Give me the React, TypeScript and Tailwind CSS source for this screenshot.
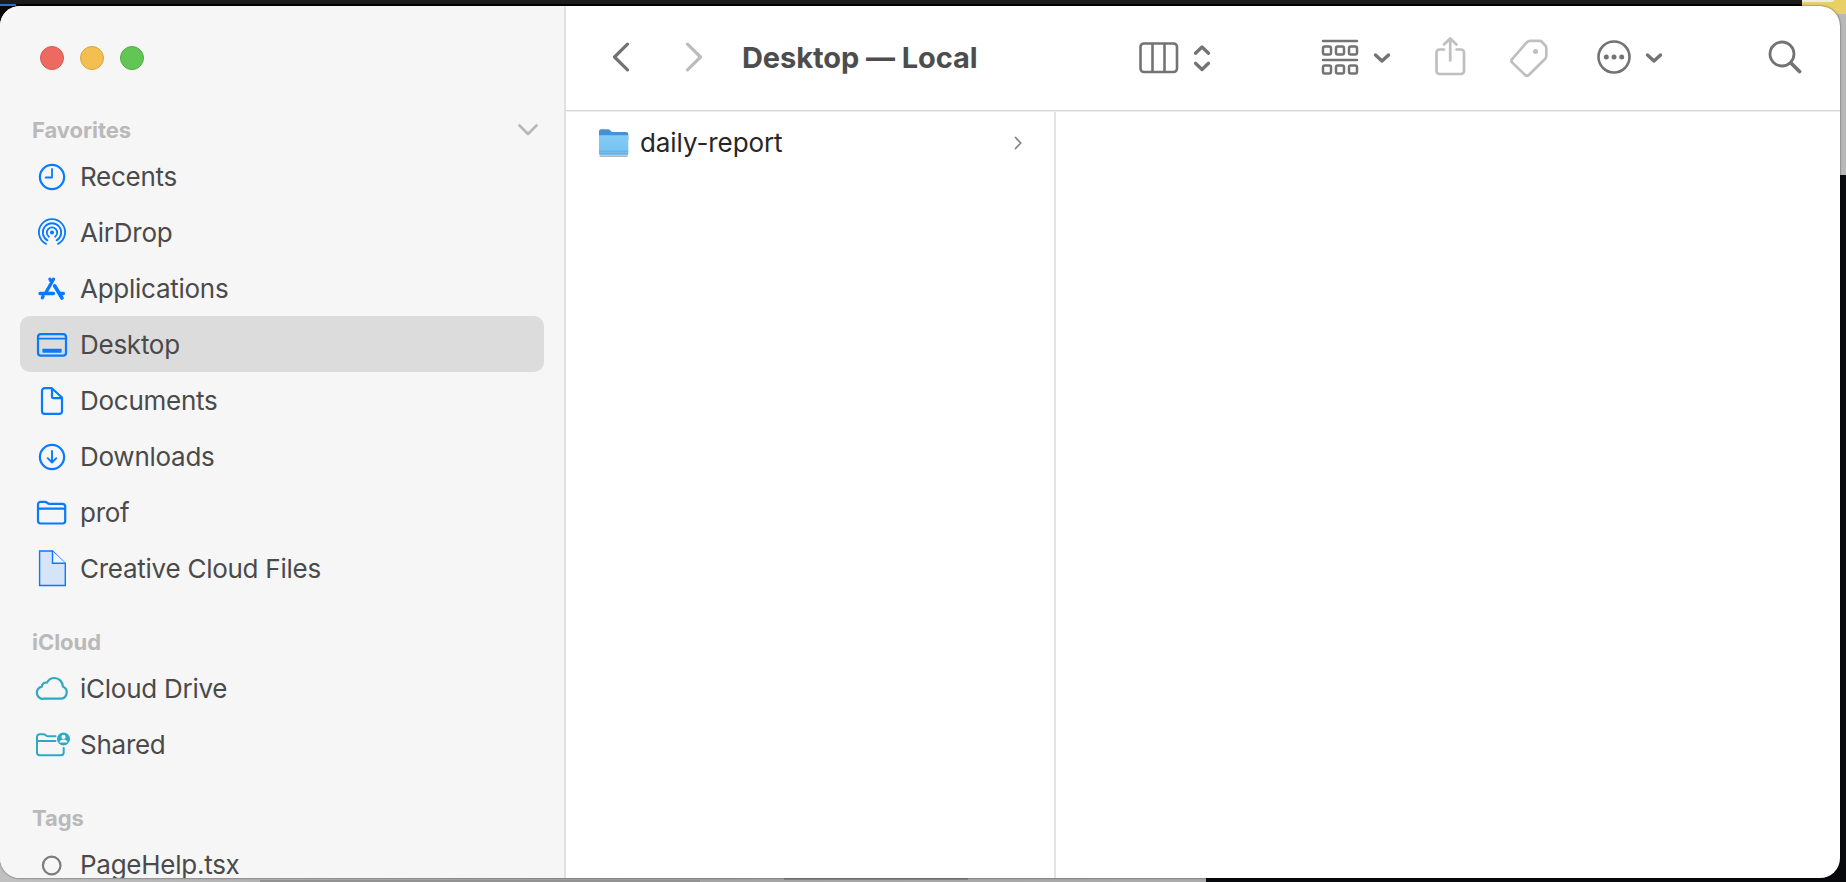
import type { ReactNode } from "react";

type IconProps = { children: ReactNode; color?: string };

function SideIcon({ children, color = "#077aff" }: IconProps) {
  return (
    <svg width="36" height="40" viewBox="0 -1 36 40" fill="none" stroke={color} strokeWidth="2.2" strokeLinecap="round" strokeLinejoin="round" className="shrink-0">
      {children}
    </svg>
  );
}

const TEAL = "#30a8c2";

const icons = {
  recents: (
    <SideIcon>
      <circle cx="18" cy="20" r="12.1" />
      <path d="M18 12v8.5h-6.3" strokeWidth="1.8" />
    </SideIcon>
  ),
  airdrop: (
    <SideIcon>
      <circle cx="18" cy="19.5" r="2" fill="#077aff" stroke="none" />
      <path d="M14.9 23.7a5.2 5.2 0 1 1 6.2 0M13.4 27.4a9.2 9.2 0 1 1 9.2 0M12 30.9a13.1 13.1 0 1 1 12 0" strokeWidth="1.8" />
    </SideIcon>
  ),
  apps: (
    <SideIcon>
      <path d="M19.5 10.2 11.6 24M15.9 10.2 17.6 12.9M6 24.5h13.5M26.2 24.5h3.2M8.3 28.8l.8-1.4" strokeWidth="3.3" />
      <path d="M20.6 16.8 28 29" strokeWidth="3.6" />
    </SideIcon>
  ),
  desktop: (
    <SideIcon>
      <rect x="4" y="9.2" width="28" height="21.4" rx="2.8" />
      <path d="M4 13.7h28" strokeWidth="1.7" />
      <rect x="8.4" y="23.7" width="19.2" height="4" rx="0.6" fill="#077aff" stroke="none" />
    </SideIcon>
  ),
  documents: (
    <SideIcon>
      <path d="M10.6 7.2h7.2L28 16.5v13.7a2.6 2.6 0 0 1-2.6 2.6H10.6A2.6 2.6 0 0 1 8 30.2V9.8a2.6 2.6 0 0 1 2.6-2.6zM18 7.5v8a1.6 1.6 0 0 0 1.6 1.6H27.6" />
    </SideIcon>
  ),
  downloads: (
    <SideIcon>
      <circle cx="18" cy="20" r="12.1" />
      <path d="M18 14v11.4M13.7 21.2 18 25.5l4.3-4.3" strokeWidth="1.9" />
    </SideIcon>
  ),
  folder: (
    <SideIcon>
      <path d="M4 28V11.5A2.7 2.7 0 0 1 6.7 8.8h4.1c1.1 0 1.7.4 2.5 1.1.7.7 1.3.9 2.3.9h12.9a2.700 2.700 0 0 1 2.700 2.700V27.800a2.700 2.700 0 0 1-2.700 2.700H6.700A2.700 2.700 0 0 1 4 28zM4 15.700h27" />
    </SideIcon>
  ),
  ccfile: (
    <SideIcon>
      <path d="M5.6 2H18.5L31.3 14.5v22H5.6z" fill="#d5e4f7" strokeWidth="1.4" strokeLinejoin="miter" />
      <path d="M18.5 2V14.3H31.3" fill="#f3f6fa" strokeWidth="1.4" strokeLinejoin="miter" />
    </SideIcon>
  ),
  cloud: (
    <SideIcon color={TEAL}>
      <path d="M10 29.7h16.5a6.4 6.4 0 0 0 2.3-12.3C28.5 12.5 25 9 20.5 9c-3.3 0-6.1 1.8-7.5 4.6-2.7-.5-5 1.3-5.2 4.1A6.1 6.1 0 0 0 10 29.7z" />
    </SideIcon>
  ),
  shared: (
    <svg width="36" height="40" viewBox="0 -1 36 40" fill="none" stroke={TEAL} strokeWidth="2" strokeLinecap="round" strokeLinejoin="round" className="shrink-0">
      <path d="M21.5 11.3h-7.2c-1 0-1.6-.3-2.3-.9-.8-.7-1.4-1.2-2.500-1.200H5.700A2.700 2.700 0 0 0 3 11.900V27.500a2.700 2.700 0 0 0 2.700 2.700H27a2.700 2.700 0 0 0 2.700-2.700V23M3 16h18.500" />
      <circle cx="29.5" cy="14" r="6.5" fill={TEAL} stroke="none" />
      <circle cx="29.5" cy="11.9" r="2.1" fill="#f6f6f6" stroke="none" />
      <path d="M25.5 17.4c.5-1.9 2-2.8 4-2.8s3.5.9 4 2.8z" fill="#f6f6f6" stroke="none" />
    </svg>
  ),
  tag: (
    <SideIcon color="#7c7c7c">
      <circle cx="17.7" cy="20.5" r="8.8" />
    </SideIcon>
  ),
};

function Item({ icon, label, selected = false }: { icon: ReactNode; label: string; selected?: boolean }) {
  return (
    <div className={`mx-5 flex h-14 shrink-0 items-center rounded-[10px] pl-[14px] ${selected ? "bg-[#dcdcdc]" : ""}`}>
      {icon}
      <span className="ml-[10px] whitespace-nowrap pt-[2px] text-[26px] leading-8 tracking-[-0.26px] text-[#4a4a4a]">{label}</span>
    </div>
  );
}

function Heading({ label, children }: { label: string; children?: ReactNode }) {
  return (
    <div className="flex h-[38px] shrink-0 items-center justify-between pl-8 pr-[26px]">
      <span className="text-[22px] font-bold leading-7 tracking-[-0.05px] text-[#b9b9b9]">{label}</span>
      {children}
    </div>
  );
}

function Glyph({ w, h, sw = 3, color = "#737373", className = "", children }: { w: number; h: number; sw?: number; color?: string; className?: string; children: ReactNode }) {
  return (
    <svg width={w} height={h} viewBox={`0 0 ${w} ${h}`} fill="none" stroke={color} strokeWidth={sw} strokeLinecap="round" strokeLinejoin="round" className={`shrink-0 ${className}`}>
      {children}
    </svg>
  );
}

function Sidebar() {
  return (
    <aside className="flex h-full w-[566px] shrink-0 flex-col overflow-hidden border-r-2 border-[#e1e1e1] bg-[#f6f6f6]">
      <div className="flex h-[104px] shrink-0 items-center gap-4 pl-10">
        <span className="size-6 rounded-full border border-[#d55b51] bg-[#ec6a5f]" />
        <span className="size-6 rounded-full border border-[#d9a443] bg-[#f5bf4f]" />
        <span className="size-6 rounded-full border border-[#55ab47] bg-[#61c654]" />
      </div>
      <div className="mt-px">
        <Heading label="Favorites">
          <Glyph w={20} h={12} sw={2.6} color="#b7b7b7"><path d="M1.5 1.5 10 10l8.5-8.5" /></Glyph>
        </Heading>
      </div>
      <div className="-mt-px flex flex-col">
        <Item icon={icons.recents} label="Recents" />
        <Item icon={icons.airdrop} label="AirDrop" />
        <Item icon={icons.apps} label="Applications" />
        <Item icon={icons.desktop} label="Desktop" selected />
        <Item icon={icons.documents} label="Documents" />
        <Item icon={icons.downloads} label="Downloads" />
        <Item icon={icons.folder} label="prof" />
        <Item icon={icons.ccfile} label="Creative Cloud Files" />
      </div>
      <div className="mt-[27px]">
        <Heading label="iCloud" />
      </div>
      <div className="-mt-px flex flex-col">
        <Item icon={icons.cloud} label="iCloud Drive" />
        <Item icon={icons.shared} label="Shared" />
      </div>
      <div className="mt-[27px]">
        <Heading label="Tags" />
      </div>
      <div className="-mt-px flex flex-col">
        <Item icon={icons.tag} label="PageHelp.tsx" />
      </div>
    </aside>
  );
}

function Toolbar() {
  return (
    <header className="flex h-[104px] shrink-0 items-center pl-[45px]">
      <Glyph w={20} h={30} sw={3.2} className="-mt-[3px]"><path d="M16.5 2.2 3.5 15l13 12.8" /></Glyph>
      <Glyph w={20} h={30} sw={3.2} color="#bcbcbc" className="-mt-[3px] ml-[53px]"><path d="M3.5 2.2 16.5 15 3.5 27.8" /></Glyph>
      <h1 className="-mt-px ml-[38px] w-[397px] whitespace-nowrap text-[29px] font-bold leading-9 tracking-[-0.07px] text-[#4d4d4d]">Desktop — Local</h1>
      <Glyph w={40} h={32} sw={2.6}>
        <rect x="1.5" y="1.5" width="36.5" height="28.5" rx="3.5" />
        <path d="M13.5 2v27.5M25.5 2v27.5" />
      </Glyph>
      <Glyph w={18} h={28} sw={3.3} className="ml-[14px]"><path d="M2.500 9.200 9 3l6.500 6.200M2.500 19.300 9 25.500l6.500-6.200" /></Glyph>
      <Glyph w={38} h={36} sw={2.5} className="-mt-[2px] ml-[110px]">
        <path d="M2 2h34M2 21h34" />
        <rect x="2" y="7.5" width="8" height="8" rx="1.8" /><rect x="15" y="7.5" width="8" height="8" rx="1.8" /><rect x="28" y="7.5" width="8" height="8" rx="1.8" />
        <rect x="2" y="26.5" width="8" height="8" rx="1.8" /><rect x="15" y="26.5" width="8" height="8" rx="1.8" /><rect x="28" y="26.5" width="8" height="8" rx="1.8" />
      </Glyph>
      <Glyph w={18} h={12} sw={3.4} className="ml-[14px]"><path d="M2.5 3 9 9l6.5-6" /></Glyph>
      <Glyph w={32} h={40} sw={2.7} color="#bfbfbf" className="-mt-[5px] ml-[43px]">
        <path d="M10 13.5H5.5a3 3 0 0 0-3 3V35a3 3 0 0 0 3 3h21.5a3 3 0 0 0 3-3V16.5a3 3 0 0 0-3-3h-4.5M16.2 24.5V3M10 8.5 16.2 2.5l6.2 6" />
      </Glyph>
      <Glyph w={38} h={38} sw={2.7} color="#bfbfbf" className="ml-[44px]">
        <path d="M20 1.8h9.5c1.1 0 1.7.3 2.4 1l3.5 3.9c.7.8.9 1.4.9 2.5v7.800c0 1.300-.4 2.100-1.300 3L18.800 36c-1.200 1.200-2.500 1.200-3.700 0L2.300 23.600c-1.200-1.200-1.200-2.600 0-3.800L17 3.100c.9-.9 1.700-1.300 3-1.300z" />
        <circle cx="25.5" cy="12.5" r="2.5" fill="#bfbfbf" stroke="none" />
      </Glyph>
      <Glyph w={36} h={36} sw={2.6} className="-mt-[2px] ml-[48px]">
        <circle cx="18" cy="18" r="15.5" />
        <g fill="#737373" stroke="none"><circle cx="10.3" cy="18" r="2.5" /><circle cx="18" cy="18" r="2.5" /><circle cx="25.7" cy="18" r="2.5" /></g>
      </Glyph>
      <Glyph w={18} h={12} sw={3.4} className="ml-[13px]"><path d="M2.5 3 9 9l6.5-6" /></Glyph>
      <Glyph w={34} h={34} sw={2.8} className="-mt-[2px] ml-[105px]">
        <circle cx="14" cy="14" r="12" />
        <path d="m23 23 8.500 8.500" strokeWidth="3.8" />
      </Glyph>
    </header>
  );
}

function FolderIcon() {
  return (
    <svg width="31" height="30" viewBox="0 0 31 30" className="shrink-0">
      <path d="M1.5 28.200h28.300" stroke="#000" strokeOpacity=".28" strokeWidth="1.500" />
      <path d="M1 3A2 2 0 0 1 3 1.200h7.500c1.500 0 2.500 2.800 4 2.800H28a2.300 2.300 0 0 1 2.300 2.300V12H1z" fill="#4791d3" />
      <path d="M1 7.300h29.300v18.200A2 2 0 0 1 28.300 27.500H3A2 2 0 0 1 1 25.500z" fill="url(#folderFront)" />
      <path d="M1 23.200h29.300M1 25.400h29.300" stroke="#5aa8dd" strokeWidth=".7" />
      <defs>
        <linearGradient id="folderFront" x1="0" y1="7" x2="0" y2="28" gradientUnits="userSpaceOnUse">
          <stop stopColor="#84ccf9" />
          <stop offset="1" stopColor="#74bfee" />
        </linearGradient>
      </defs>
    </svg>
  );
}

function Backdrop() {
  return (
    <div className="absolute inset-0 flex flex-col justify-between overflow-hidden bg-[#08090d]">
      <div className="flex h-[175px] justify-between">
        <div className="h-[6px] w-[1802px] border-b-2 border-black bg-[#1c1c1c]">
          <div className="mt-1 h-[2px] w-4 bg-[#2872cf]" />
        </div>
        <div className="flex w-11 flex-col bg-[#b8b8b8]">
          <div className="h-[14px] bg-[#e9cf68]"><div className="h-[2px] w-8 rounded-br-lg bg-[#ececec]" /></div>
        </div>
      </div>
      <div className="flex h-9 w-[1206px] items-end bg-gradient-to-r from-[#c0c0c0] via-[#a2a2a2] to-[#ababab]">
        <div className="ml-[260px] h-[2px] w-[440px] bg-[#929292]" />
        <div className="mb-[2px] ml-[84px] h-[2px] w-[184px] bg-[#858585]" />
      </div>
    </div>
  );
}

export default function App() {
  return (
    <main className="relative h-[882px] w-[1846px] overflow-hidden font-['Inter','Liberation_Sans',sans-serif]">
      <Backdrop />
      <section className="absolute left-0 top-[6px] flex h-[872px] w-[1840px] overflow-hidden rounded-[20px] bg-white shadow-[0_0_2px_rgba(0,0,0,0.7)]">
        <Sidebar />
        <div className="flex min-w-0 flex-1 flex-col">
          <Toolbar />
          <div className="h-px shrink-0 bg-[#d6d6d6]" />
          <div className="flex min-h-0 flex-1 border-t border-[#eeeeee]">
            <div className="w-[490px] shrink-0 border-r-2 border-[#e3e3e3]">
              <div className="flex h-[54px] items-center pl-8 pr-[31px] pt-[7px]">
                <FolderIcon />
                <span className="ml-[11px] flex-1 whitespace-nowrap text-[26px] leading-8 tracking-[-0.08px] text-[#262626]">daily-report</span>
                <Glyph w={10} h={14} sw={1.8} color="#858585"><path d="M2.500 1.500 7.800 7 2.500 12.500" /></Glyph>
              </div>
            </div>
            <div className="flex-1" />
          </div>
        </div>
      </section>
    </main>
  );
}
